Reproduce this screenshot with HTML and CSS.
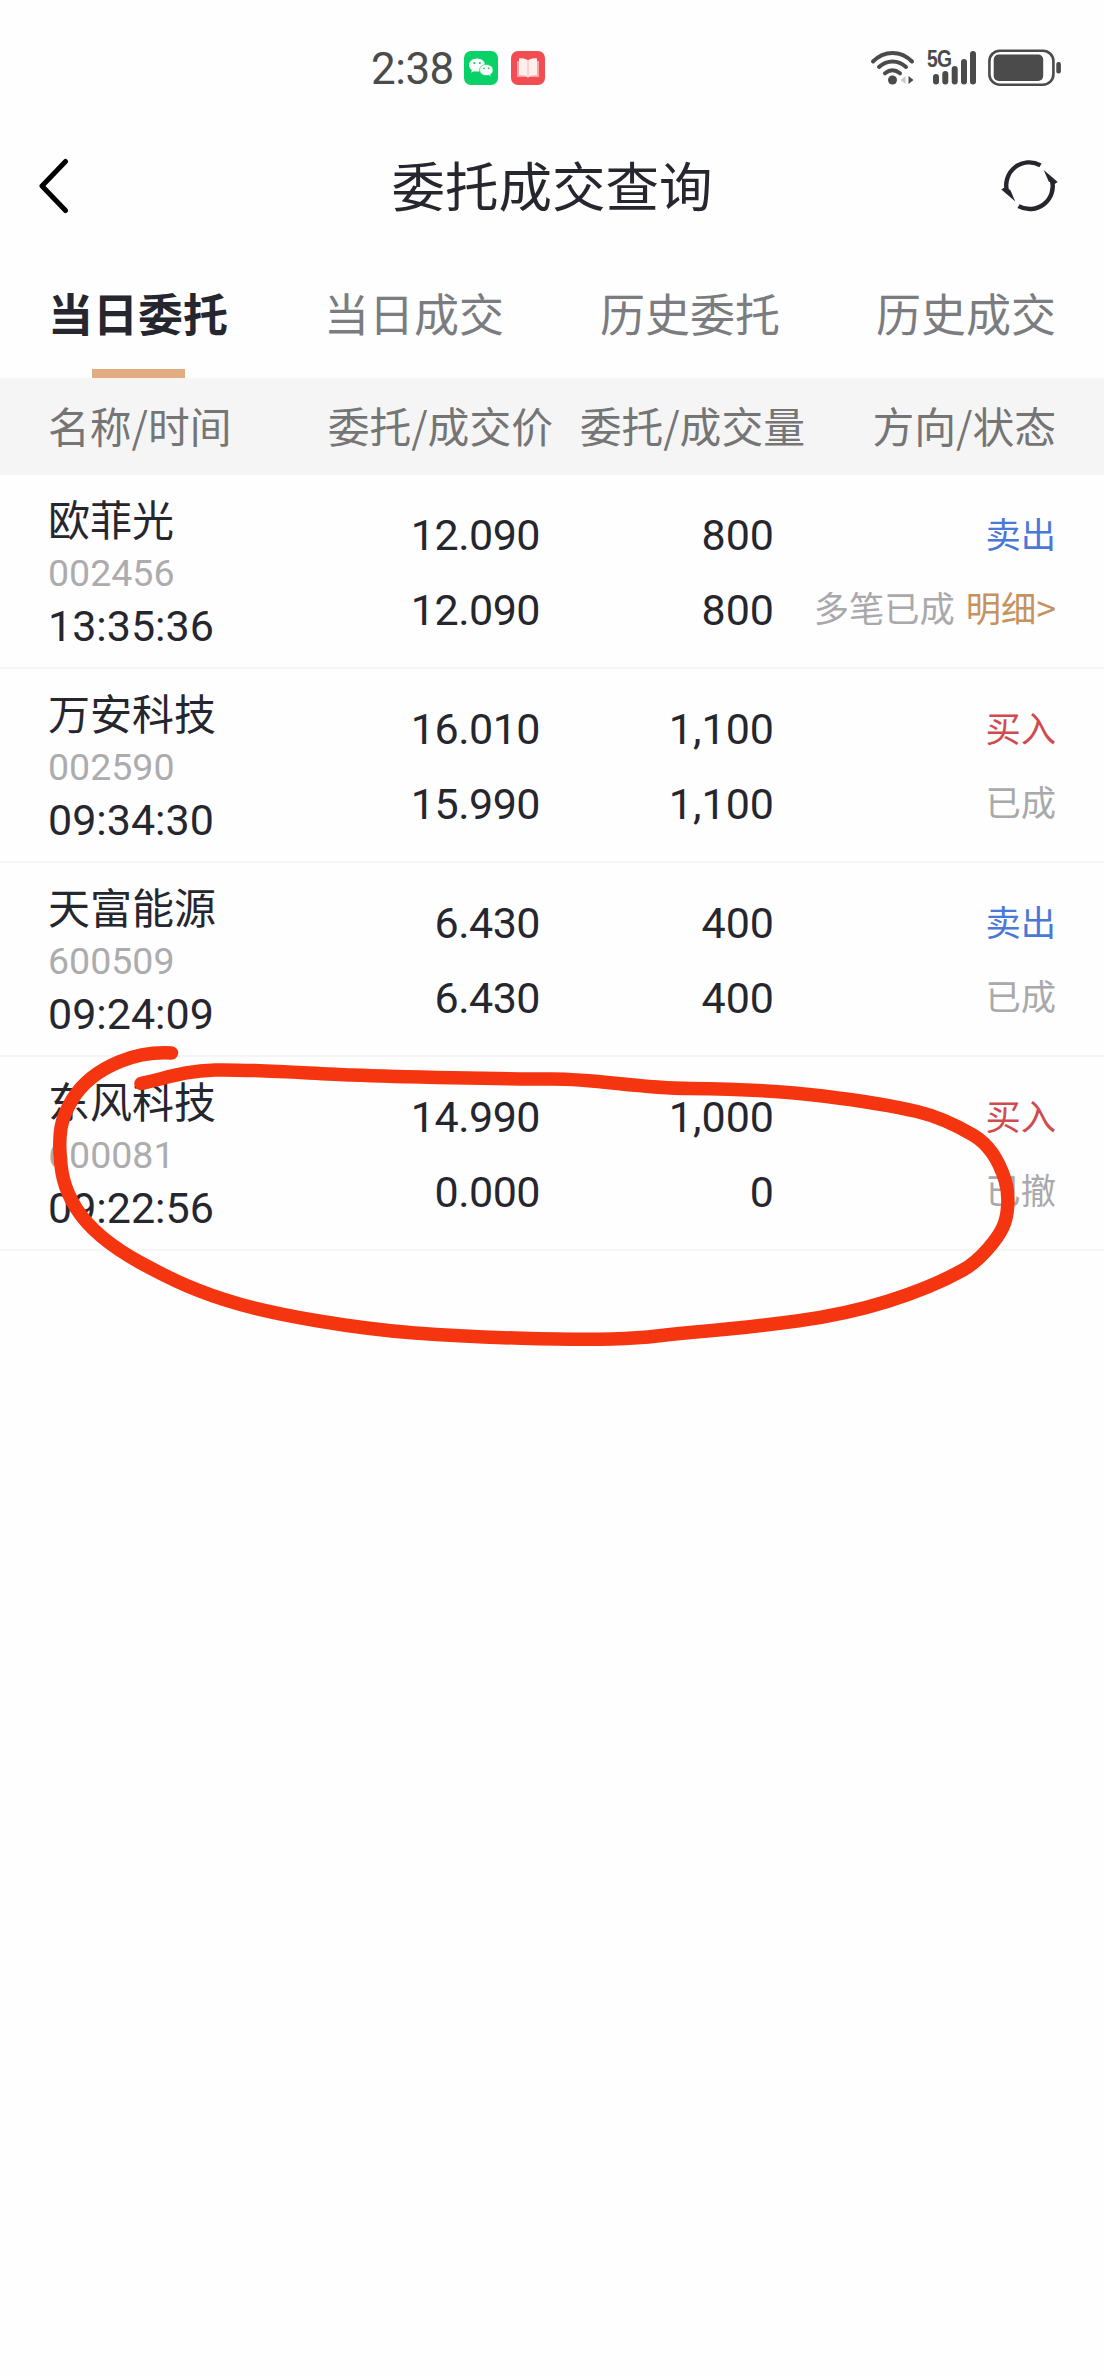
FILE: index.html
```html
<!DOCTYPE html>
<html lang="zh-CN">
<head>
  <meta charset="UTF-8">
  <meta name="viewport" content="width=device-width, initial-scale=1.0">
  <title>委托成交查询</title>
  <link rel="stylesheet" href="styles.css">
</head>
<body>
  <div class="status-bar">
    <div class="status-left">
      <span class="clock">2:38</span>
      <svg class="app-icon" viewBox="0 0 34 34">
        <rect width="34" height="34" rx="7" fill="#07d167"/>
        <path d="M13 7.500c-4.500 0-8 2.900-8 6.500 0 2 1.100 3.800 2.800 5l-.6 2.700 2.900-1.500c.9.300 1.900.4 2.900.4 4.500 0 8-2.900 8-6.600s-3.500-6.500-8-6.500z" fill="#fff"/>
        <path d="M22.300 13.500c-3.800 0-6.700 2.400-6.700 5.500s2.900 5.600 6.700 5.600c.8 0 1.600-.1 2.300-.3l2.500 1.200-.5-2.200c1.600-1 2.500-2.500 2.500-4.300 0-3.100-3-5.500-6.800-5.500z" fill="#fff" stroke="#07d167" stroke-width=".7"/>
        <g fill="#07d167">
          <circle cx="10.300" cy="12" r="1.100"/><circle cx="15.800" cy="12" r="1.100"/>
          <circle cx="20" cy="17.300" r=".9"/><circle cx="24.600" cy="17.300" r=".9"/>
        </g>
      </svg>
      <svg class="app-icon" viewBox="0 0 34 34">
        <rect width="34" height="34" rx="7" fill="#f24d53"/>
        <path d="M6 10h22v16H6z" fill="#f9a5a5"/>
        <path d="M8 7.500c4-.8 7 .2 9 2 2-1.800 5-2.800 9-2v17c-4-.6-7 .2-9 2.200-2-2-5-2.800-9-2.200z" fill="#fff0ee"/>
        <path d="M17 9.500v17" stroke="#f7b6b4" stroke-width="1"/>
      </svg>
    </div>
    <div class="status-right">
      <svg class="wifi" viewBox="0 0 46 36" fill="none" stroke="#4b4b4b" stroke-width="4" stroke-linecap="round">
        <path d="M3 12.500C14 1 31 1 42 12.500"/>
        <path d="M9 18c8-7.500 19-7.500 27 0"/>
        <path d="M15 24.300c5-4 10-4 15 0"/>
        <circle cx="22.500" cy="31" r="4.500" fill="#4b4b4b" stroke="none"/>
        <path d="M35.500 27v8l-5-4z" fill="#c9c9c9" stroke="none"/>
        <path d="M38.500 27v8l5-4z" fill="#4b4b4b" stroke="none"/>
      </svg>
      <div class="signal">
        <span class="net">5G</span>
        <svg class="bars" viewBox="0 0 44 36" stroke="#4b4b4b" stroke-width="6" stroke-linecap="round">
          <path d="M3 27v4.500M12.300 24v7.500M21.700 19v12.500M31 12v19.500M40 4v27.500"/>
        </svg>
      </div>
      <svg class="battery" viewBox="0 0 74 38">
        <rect x="1.400" y="1.700" width="64" height="34" rx="10.500" fill="none" stroke="#4b4b4b" stroke-width="2.600"/>
        <rect x="5.700" y="5.500" width="49.500" height="26.500" rx="5" fill="#4b4b4b"/>
        <rect x="68.300" y="13" width="4.600" height="11.500" rx="2" fill="#4b4b4b"/>
      </svg>
    </div>
  </div>

  <div class="nav-bar">
    <svg class="back" viewBox="0 0 32 56">
      <path d="M27.500 3.500L4 28l23.500 24.500" fill="none" stroke="#000" stroke-width="5" stroke-linecap="round" stroke-linejoin="round"/>
    </svg>
    <h1>委托成交查询</h1>
    <svg class="refresh" viewBox="0 0 58 52">
      <g fill="none" stroke="#26262f" stroke-width="4.400">
        <path d="M39.500 5.300A23 23 0 0 0 6.200 32"/>
        <path d="M17.500 46.100A23 23 0 0 0 50.800 19.400"/>
      </g>
      <path d="M.3 29.500l3-2 6 2.500 5 11.500z" fill="#26262f"/>
      <path d="M56.700 21.900l-3 2-6-2.500-5-11.500z" fill="#26262f"/>
    </svg>
  </div>

  <div class="tabs">
    <div class="tab active">当日委托</div>
    <div class="tab">当日成交</div>
    <div class="tab">历史委托</div>
    <div class="tab">历史成交</div>
  </div>

  <div class="table-head">
    <span>名称/时间</span>
    <span>委托/成交价</span>
    <span>委托/成交量</span>
    <span>方向/状态</span>
  </div>

  <div class="list">
    <div class="row">
      <div class="stock">
        <span class="name">欧菲光</span>
        <span class="code">002456</span>
        <span class="time">13:35:36</span>
      </div>
      <div class="num price"><span>12.090</span><span>12.090</span></div>
      <div class="num"><span>800</span><span>800</span></div>
      <div class="state"><span class="sell">卖出</span><span>多笔已成 <a class="detail">明细&gt;</a></span></div>
    </div>
    <div class="row">
      <div class="stock">
        <span class="name">万安科技</span>
        <span class="code">002590</span>
        <span class="time">09:34:30</span>
      </div>
      <div class="num price"><span>16.010</span><span>15.990</span></div>
      <div class="num"><span>1,100</span><span>1,100</span></div>
      <div class="state"><span class="buy">买入</span><span>已成</span></div>
    </div>
    <div class="row">
      <div class="stock">
        <span class="name">天富能源</span>
        <span class="code">600509</span>
        <span class="time">09:24:09</span>
      </div>
      <div class="num price"><span>6.430</span><span>6.430</span></div>
      <div class="num"><span>400</span><span>400</span></div>
      <div class="state"><span class="sell">卖出</span><span>已成</span></div>
    </div>
    <div class="row">
      <div class="stock">
        <span class="name">东风科技</span>
        <span class="code">600081</span>
        <span class="time">09:22:56</span>
      </div>
      <div class="num price"><span>14.990</span><span>0.000</span></div>
      <div class="num"><span>1,000</span><span>0</span></div>
      <div class="state"><span class="buy">买入</span><span>已撤</span></div>
    </div>
  </div>

  <!-- hand-drawn mark over the last order -->
  <svg class="mark" viewBox="0 1040 1104 320">
    <path d="M171.500 1053C153 1052 136 1055 120 1061.500S84 1080 72 1100S59 1135 60 1153S63 1187 76 1208S110 1246 141 1263S200 1293 239 1304S350 1328 415 1333S570 1340 612 1339S650 1336 690 1332.500S760 1326 797 1321S860 1310 887 1301.500S945 1280 963 1270S998 1238 1003 1227S1010 1196 1005 1180S990 1145 973 1135S940 1117 917 1111.500S855 1100 823 1096S745 1089 690 1088.500S600 1079 552 1079S400 1077 352 1075S245 1069 215 1070S170 1077 141 1083.500"/>
  </svg>
</body>
</html>
```
FILE: styles.css
```css
* {
  box-sizing: border-box;
}

body {
  margin: 0;
  position: relative;
  min-height: 2376px;
  background-color: #fefefe;
  color: #26262f;
  font-family: "Noto Sans CJK SC", sans-serif;
}

svg {
  display: block;
}

/* status bar */
.status-bar {
  display: flex;
  justify-content: space-between;
  height: 136px;
  padding: 49px 42px 0 371px;
}

.status-left {
  display: flex;
  height: 38px;
  align-items: center;
}

.clock {
  width: 93px;
  font-family: Roboto, sans-serif;
  font-size: 44px;
  line-height: 38px;
  letter-spacing: -.5px;
  padding-top: 2px;
  color: #4b4b4b;
}

.app-icon {
  width: 34px;
  height: 34px;
  margin-right: 13px;
}

.status-right {
  display: flex;
  height: 38px;
}

.wifi {
  width: 46px;
  height: 36px;
  margin-right: 11px;
}

.signal {
  position: relative;
  width: 61px;
  padding-left: 6px;
}

.net {
  position: absolute;
  top: 0;
  left: 0;
  font-family: "Liberation Sans", sans-serif;
  font-size: 23px;
  font-weight: bold;
  line-height: 20px;
  letter-spacing: -1px;
  color: #4b4b4b;
  transform: scaleX(.84);
  transform-origin: left;
}

.bars {
  width: 44px;
  height: 36px;
  margin-top: 1px;
}

.battery {
  width: 74px;
  height: 38px;
}

/* title */
.nav-bar {
  display: flex;
  align-items: center;
  justify-content: space-between;
  height: 100px;
  padding: 0 45px 0 38px;
}

.back {
  width: 32px;
  height: 56px;
}

.nav-bar h1 {
  margin: 0;
  padding: 0 0 4px 33px;
  font-size: 53.5px;
  font-weight: 400;
  line-height: 80px;
}

.refresh {
  width: 58px;
  height: 52px;
}

/* tabs */
.tabs {
  display: grid;
  grid-template-columns: repeat(4, 1fr);
  height: 142px;
}

.tab {
  display: flex;
  flex-direction: column;
  align-items: center;
  justify-content: space-between;
  padding-top: 44px;
  font-size: 45px;
  line-height: 66px;
  color: #7b7c80;
}

.tab.active {
  font-weight: 700;
  color: #26262f;
}

.tab.active::after {
  content: "";
  width: 93px;
  height: 9px;
  background-color: #e1ad80;
}

/* orders */
.table-head {
  display: grid;
  grid-template-columns: 211px 294px 252px 1fr;
  height: 97px;
  padding: 0 48px;
  background-color: #f5f5f5;
  font-size: 41.8px;
  line-height: 94px;
  color: #757575;
  white-space: nowrap;
}

.table-head span + span {
  text-align: right;
}

.row {
  display: grid;
  grid-template-columns: 211px 281px 234px 1fr;
  height: 194px;
  padding: 0 48px;
  border-bottom: 2px solid #f5f5f5;
}

.stock {
  display: flex;
  flex-direction: column;
  padding-top: 15px;
}

.name {
  font-size: 42px;
  line-height: 56px;
}

.code {
  font-family: Roboto, sans-serif;
  font-size: 37.5px;
  line-height: 54px;
  color: #acacae;
}

.time {
  font-family: Roboto, sans-serif;
  font-size: 43px;
  line-height: 52px;
}

.num,
.state {
  display: flex;
  flex-direction: column;
  align-items: flex-end;
  padding-top: 23px;
  line-height: 75px;
  white-space: nowrap;
}

.num {
  font-family: Roboto, sans-serif;
  font-size: 43px;
}

.price {
  letter-spacing: -.5px;
}

.state {
  padding-top: 21px;
  font-size: 35.3px;
  line-height: 74px;
  color: #a9a9ab;
}

.sell {
  color: #4a78d8;
}

.buy {
  color: #d04b4e;
}

.detail {
  margin-left: 3px;
  color: #c4935f;
}

.mark {
  position: absolute;
  top: 1040px;
  left: 0;
  width: 1104px;
  height: 320px;
}

.mark path {
  fill: none;
  stroke: #f53510;
  stroke-width: 13.5;
  stroke-linecap: round;
  stroke-linejoin: round;
}
```
